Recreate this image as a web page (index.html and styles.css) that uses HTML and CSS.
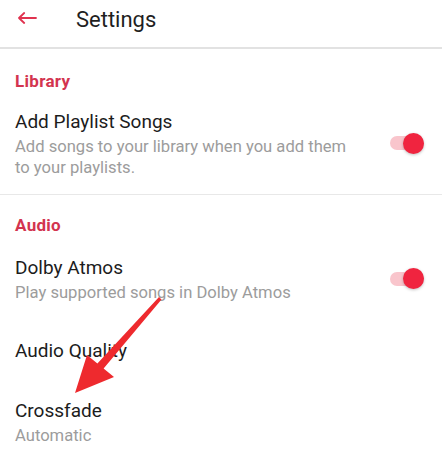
FILE: index.html
```html
<!DOCTYPE html>
<html lang="en">
<head>
    <meta charset="UTF-8">
    <title>Settings</title>
    <link rel="stylesheet" href="styles.css">
</head>
<body>
    <header class="topbar">
        <svg class="back" width="20" height="12" viewBox="0 0 20 12">
            <path d="M19 6H2M7.2 1L2 6l5.2 5" fill="none" stroke="#e0324f" stroke-width="1.8" stroke-linecap="round" stroke-linejoin="round"/>
        </svg>
        <h1>Settings</h1>
    </header>

    <section class="group">
        <h2>Library</h2>
        <div class="row">
            <div class="text">
                <div class="title">Add Playlist Songs</div>
                <div class="sub">Add songs to your library when you add them to your playlists.</div>
            </div>
            <span class="toggle"></span>
        </div>
    </section>

    <section class="group last">
        <h2>Audio</h2>
        <div class="row">
            <div class="text">
                <div class="title">Dolby Atmos</div>
                <div class="sub">Play supported songs in Dolby Atmos</div>
            </div>
            <span class="toggle"></span>
        </div>
        <div class="row">
            <div class="text">
                <div class="title">Audio Quality</div>
            </div>
        </div>
        <div class="row">
            <div class="text">
                <div class="title">Crossfade</div>
                <div class="sub">Automatic</div>
            </div>
        </div>
    </section>

    <svg class="pointer" width="442" height="458" viewBox="0 0 442 458">
        <path d="M159 297 L161.5 299.5 L103.6 368.5 L114 377 L75 393 L87 355 L97.4 363.5 Z" fill="#ee2a2e"/>
    </svg>
</body>
</html>
```

FILE: styles.css
```css
body {
    margin: 0;
    font-family: Roboto, "Noto Sans", sans-serif;
    background: #fff;
    color: #1c1c1c;
    width: 442px;
    height: 458px;
    overflow: hidden;
    position: relative;
}
.topbar {
    display: flex;
    align-items: flex-start;
    height: 40px;
    padding: 7px 0 0 17px;
    border-bottom: 2px solid #e2e2e2;
}
.back {
    margin-top: 5px;
}
.topbar h1 {
    margin: 0 0 0 39px;
    font-size: 22px;
    line-height: 26px;
    font-weight: 400;
    color: #1f1f1f;
}
.group {
    display: flex;
    flex-direction: column;
    gap: 36px;
    padding: 22px 14px 16px 15px;
    border-bottom: 1px solid #e8e8e8;
}
.group.last {
    border-bottom: none;
    padding-top: 20px;
}
.group h2 {
    margin: 0 0 -17px 0;
    font-size: 17px;
    line-height: 20px;
    font-weight: 700;
    letter-spacing: 0.3px;
    color: #d3344f;
}
.group.last h2 {
    margin-bottom: -15px;
}
.row {
    display: flex;
    align-items: center;
}
.text {
    flex: 1;
    max-width: 340px;
}
.title {
    font-size: 19px;
    line-height: 24px;
}
.sub {
    font-size: 16.6px;
    line-height: 21px;
    color: #9c9c9c;
    margin-top: 2px;
}
.toggle {
    position: relative;
    width: 34px;
    height: 14px;
    border-radius: 7px;
    background: #f9c5cc;
    margin: -2px 4px 0 auto;
}
.toggle::after {
    content: "";
    position: absolute;
    right: 0;
    top: -3.5px;
    width: 21px;
    height: 21px;
    border-radius: 50%;
    background: #f0243f;
    box-shadow: 0 1px 3px rgba(0, 0, 0, 0.25);
}
.pointer {
    position: absolute;
    left: 0;
    top: 0;
}
```
